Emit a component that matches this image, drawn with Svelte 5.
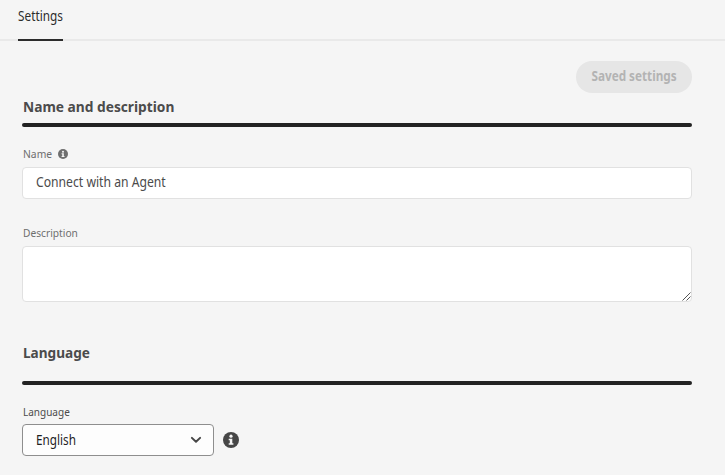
<script>
  let name = $state('Connect with an Agent');
  let description = $state('');
</script>

{#snippet info(size)}
  <svg width={size} height={size} viewBox="0 0 16 16" aria-hidden="true">
    <circle cx="8" cy="8" r="8" fill="currentColor" />
    <circle cx="8" cy="4.2" r="1.6" fill="#f5f5f5" />
    <path d="M5.7 6.8h3.6v4.5h1.1v1.4H5.7v-1.4h1.1V8.2H5.7z" fill="#f5f5f5" />
  </svg>
{/snippet}

<main>
  <nav><button class="tab"><span class="t-tab">Settings</span></button></nav>
  <div class="content">
    <div class="actions"><button class="saved" disabled><span class="t-saved">Saved settings</span></button></div>

    <section>
      <h2><span class="t-h1">Name and description</span></h2>
      <hr />
      <label class="name-label" for="name"><span class="t-name">Name</span>{@render info(10)}</label>
      <div class="field"><input id="name" bind:value={name} /></div>
      <label class="desc-label" for="desc"><span class="t-desc">Description</span></label>
      <div class="area">
        <textarea id="desc" bind:value={description}></textarea>
        <svg class="grip" width="9" height="9" viewBox="0 0 9 9" aria-hidden="true">
          <path d="M.5 8.5l8-8M4.5 8.5l4-4" stroke="#555" stroke-width="1" fill="none" />
        </svg>
      </div>
    </section>

    <section class="language">
      <h2><span class="t-h2">Language</span></h2>
      <hr />
      <div class="lang-label"><span class="t-lang">Language</span></div>
      <div class="row">
        <button class="select">
          <span class="t-select">English</span>
          <svg width="12" height="8" viewBox="0 0 12 8" aria-hidden="true">
            <path d="M1.9 1.9L6 5.8l4.1-3.9" fill="none" stroke="#464646" stroke-width="2" stroke-linecap="round" stroke-linejoin="round" />
          </svg>
        </button>
        {@render info(16)}
      </div>
    </section>
  </div>
</main>

<style>
  :global(body) { margin: 0; background: #f5f5f5; }
  main {
    box-sizing: border-box;
    height: 475px;
    overflow: hidden;
    background: #f5f5f5;
    color: #4b4b4b;
    font-family: "Noto Sans", "Open Sans", sans-serif;
    font-size: 13.5px;
  }
  button, input, textarea { font: inherit; margin: 0; box-sizing: border-box; }
  button { padding: 0; border: 0; background: none; }
  span { display: inline-block; white-space: nowrap; transform-origin: left center; }
  svg { display: block; flex: none; }
  nav {
    box-sizing: border-box;
    height: 41px;
    padding-left: 18px;
    border-bottom: 2px solid #e9e9e9;
  }
  .tab {
    display: flex;
    align-items: center;
    width: 45px;
    height: 41px;
    padding-bottom: 7px;
    border-bottom: 2px solid #2c2c2c;
    color: #2c2c2c;
    line-height: 18px;
  }
  .content { width: 670px; margin-left: 22px; padding-top: 20px; }
  .actions { display: flex; justify-content: flex-end; }
  .saved {
    display: flex;
    align-items: center;
    justify-content: center;
    width: 116px;
    height: 32px;
    padding-bottom: 2px;
    border-radius: 16px;
    background: #e6e6e6;
    color: #b3b3b3;
    font-weight: 700;
    line-height: 18px;
  }
  h2 { display: flex; align-items: center; box-sizing: border-box; height: 28px; margin: 0 0 0 1px; padding-bottom: 2px; font-size: 15px; font-weight: 700; line-height: 26px; }
  hr { height: 4px; margin: 2px 0 0; border: 0; border-radius: 2px; background: #222; }
  label, .lang-label {
    display: flex;
    align-items: center;
    box-sizing: border-box;
    height: 16px;
    margin-left: 1px;
    font-size: 11.5px;
    line-height: 14px;
    color: #6e6e6e;
  }
  .name-label { gap: 3px; margin-top: 19px; }
  .field {
    box-sizing: border-box;
    height: 32px;
    margin-top: 5px;
    padding: 0 12.5px;
    border: 1px solid #e1e1e1;
    border-radius: 4px;
    background: #fff;
  }
  input {
    display: block;
    width: 100%;
    height: 28px;
    padding: 0;
    border: 0;
    background: none;
    color: #4b4b4b;
    outline: 0;
    transform: scaleX(.902);
    transform-origin: left center;
  }
  .desc-label { margin-top: 26px; }
  .area { position: relative; height: 56px; margin-top: 5px; }
  textarea {
    display: block;
    width: 670px;
    height: 56px;
    border: 1px solid #e1e1e1;
    border-radius: 4px;
    background: #fff;
    resize: none;
    outline: 0;
  }
  .grip { position: absolute; right: 1px; bottom: 1px; }
  .language { margin-top: 37px; }
  .language hr { margin-top: 14px; }
  .lang-label { margin-top: 19px; color: #4b4b4b; }
  .row { display: flex; align-items: center; gap: 9px; margin-top: 4px; color: #464646; }
  .select {
    display: flex;
    align-items: center;
    justify-content: space-between;
    width: 192px;
    height: 32px;
    padding: 0 11px 1px 13px;
    border: 1px solid #8e8e8e;
    border-radius: 4px;
    background: #fdfdfd;
    color: #1f1f1f;
    line-height: 18px;
  }
  .t-tab { transform: scaleX(.874); }
  .t-saved { transform: scaleX(.868); transform-origin: center; }
  .t-h1 { transform: scaleX(.916); }
  .t-h2 { transform: scaleX(.906); }
  .t-name { transform: scaleX(.897); }
  .t-desc { transform: scaleX(.887); }
  .t-lang { transform: scaleX(.87); }
  .t-select { transform: scaleX(.87); }
</style>
